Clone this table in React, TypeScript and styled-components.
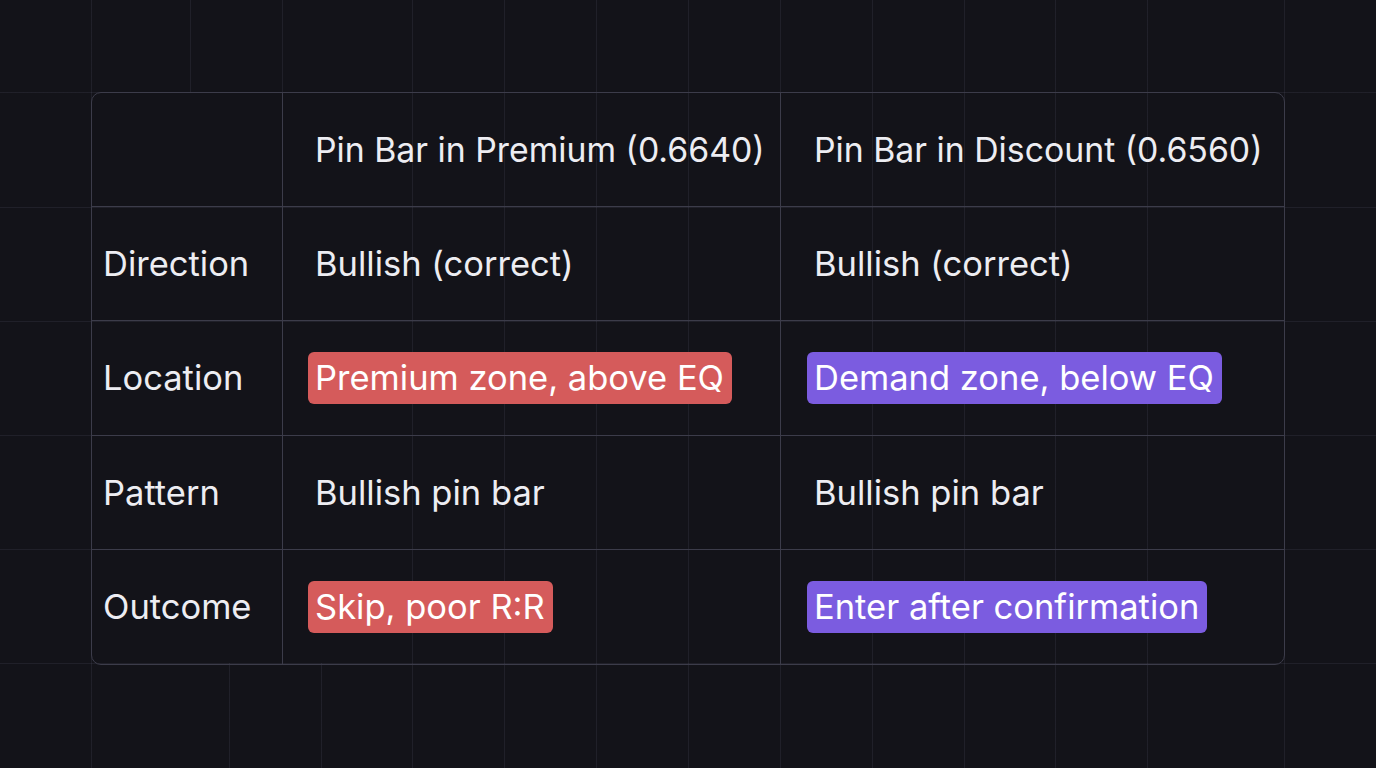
import styled, { createGlobalStyle } from "styled-components";

const gridColor = "rgba(120, 120, 150, 0.13)";

// background grid: faint line pieces
type Line = { axis: "v" | "h"; at: number; from: number; to: number };

const lines: Line[] = [
  ...[91, 412, 504, 596, 688, 780, 872, 964, 1055, 1147, 1284].map(
    (x): Line => ({ axis: "v", at: x, from: 0, to: 768 })
  ),
  { axis: "v", at: 190, from: 0, to: 92 },
  { axis: "v", at: 282, from: 0, to: 92 },
  { axis: "v", at: 229, from: 663, to: 768 },
  { axis: "v", at: 321, from: 663, to: 768 },
  ...[92, 207, 321, 435, 549, 663].map(
    (y): Line => ({ axis: "h", at: y, from: 0, to: 1376 })
  ),
];

const layer = (l: Line) => {
  const img = `linear-gradient(${gridColor}, ${gridColor})`;
  return l.axis === "v"
    ? { img, pos: `${l.at}px ${l.from}px`, size: `1px ${l.to - l.from}px` }
    : { img, pos: `${l.from}px ${l.at}px`, size: `${l.to - l.from}px 1px` };
};

const layers = lines.map(layer);

const GlobalStyle = createGlobalStyle`
  html, body {
    margin: 0;
    padding: 0;
    background: #131319;
  }
  body {
    font-family: Inter, "Noto Sans", sans-serif;
    color: #ededf2;
  }
`;

const Page = styled.div`
  width: 1376px;
  height: 768px;
  box-sizing: border-box;
  padding: 92px 0 0 91px;
  background-color: #131319;
  background-image: ${layers.map((l) => l.img).join(", ")};
  background-position: ${layers.map((l) => l.pos).join(", ")};
  background-size: ${layers.map((l) => l.size).join(", ")};
  background-repeat: no-repeat;
`;

const Table = styled.div`
  width: 1194px;
  display: grid;
  grid-template-columns: 191px 498px 505px;
  grid-auto-rows: 114.2px;
  border: 1px solid #3c3c4a;
  border-radius: 10px;
  box-sizing: border-box;
  overflow: hidden;
`;

const Cell = styled.div<{ $col: number; $head?: boolean; $lastRow?: boolean }>`
  display: flex;
  align-items: center;
  padding-left: ${(p) => (p.$col === 0 ? "11px" : p.$col === 1 ? "32px" : "33px")};
  border-right: ${(p) => (p.$col === 2 ? "none" : "1px solid #3c3c4a")};
  border-bottom: ${(p) => (p.$lastRow ? "none" : "1px solid #3c3c4a")};
  font-size: ${(p) => (p.$head ? "33.8px" : "34.5px")};
  font-weight: 400;
  color: #ededf2;
  white-space: nowrap;
`;

const Badge = styled.span<{ $tone: "red" | "purple" }>`
  display: inline-block;
  margin-left: -7px;
  padding: 6px 8px 6px 7px;
  border-radius: 6px;
  line-height: 40px;
  color: #ffffff;
  background: ${(p) => (p.$tone === "red" ? "#d55b5b" : "#7b5ce0")};
`;

type Value = string | { text: string; tone: "red" | "purple" };

const header = ["", "Pin Bar in Premium (0.6640)", "Pin Bar in Discount (0.6560)"];

const rows: [string, Value, Value][] = [
  ["Direction", "Bullish (correct)", "Bullish (correct)"],
  [
    "Location",
    { text: "Premium zone, above EQ", tone: "red" },
    { text: "Demand zone, below EQ", tone: "purple" },
  ],
  ["Pattern", "Bullish pin bar", "Bullish pin bar"],
  [
    "Outcome",
    { text: "Skip, poor R:R", tone: "red" },
    { text: "Enter after confirmation", tone: "purple" },
  ],
];

const renderValue = (v: Value) =>
  typeof v === "string" ? v : <Badge $tone={v.tone}>{v.text}</Badge>;

const App = () => {
  return (
    <>
      <GlobalStyle />
      <Page>
        <Table>
          {header.map((h, i) => (
            <Cell key={`h${i}`} $head $col={i}>
              {h}
            </Cell>
          ))}
          {rows.map((row, r) =>
            row.map((v, c) => (
              <Cell key={`${r}-${c}`} $col={c} $lastRow={r === rows.length - 1}>
                {renderValue(v)}
              </Cell>
            ))
          )}
        </Table>
      </Page>
    </>
  );
};

export default App;
